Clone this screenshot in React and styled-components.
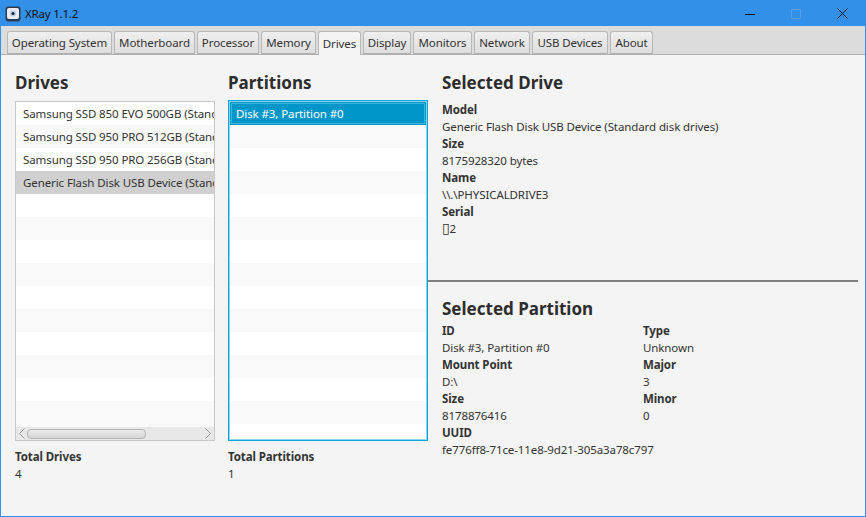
import { createGlobalStyle, styled } from "styled-components";

const Global = createGlobalStyle`
  html, body { margin: 0; padding: 0; }
  body { font-family: "Noto Sans", "Open Sans", sans-serif; color: #333; }
`;

const Win = styled.div`
  width: 866px;
  height: 517px;
  box-sizing: border-box;
  display: flex;
  flex-direction: column;
  border: 1px solid #3390e8;
  background: #f4f4f4;
  overflow: hidden;
`;
const TitleBar = styled.div`
  height: 25px;
  flex: none;
  background: #3390e8;
  display: flex;
  align-items: center;
  padding-left: 4px;
  color: #111;
`;
const AppTitle = styled.span`
  font-size: 11.5px;
  letter-spacing: -0.2px;
  margin-left: 4px;
  flex: 1;
`;
const WinBtn = styled.div`
  width: 46px;
  height: 25px;
  display: flex;
  align-items: center;
  justify-content: center;
`;
const TabBar = styled.div`
  height: 29px;
  flex: none;
  box-sizing: border-box;
  background: #dcdcdc;
  border-bottom: 1px solid #b0b0b0;
  display: flex;
  align-items: flex-end;
  padding-left: 6px;
  gap: 2px;
`;
const Tab = styled.div`
  width: ${(p) => p.$w}px;
  height: ${(p) => (p.$active ? 24 : 23)}px;
  box-sizing: border-box;
  margin-bottom: ${(p) => (p.$active ? -1 : 0)}px;
  border: 1px solid #b8b8b8;
  border-bottom: ${(p) => (p.$active ? "none" : "1px solid #b0b0b0")};
  border-radius: 3px 3px 0 0;
  background: ${(p) => (p.$active ? "#f4f4f4" : "linear-gradient(#efefef, #dedede)")};
  font-size: 11.5px;
  letter-spacing: -0.1px;
  color: #333;
  display: flex;
  align-items: center;
  justify-content: center;
  white-space: nowrap;
  overflow: hidden;
`;
const Content = styled.div`
  flex: 1;
  display: flex;
  min-height: 0;
`;
const ListColumn = styled.div`
  width: 200px;
  flex: none;
  margin-left: ${(p) => p.$ml}px;
  display: flex;
  flex-direction: column;
  padding-top: 16px;
`;
const Heading = styled.div`
  font-size: 17px;
  font-weight: 700;
  line-height: 24px;
  color: #2d2d2d;
`;
const ListBox = styled.div`
  height: ${(p) => (p.$focused ? 341 : 340)}px;
  margin-top: ${(p) => (p.$focused ? 5 : 6)}px;
  box-sizing: border-box;
  display: flex;
  flex-direction: column;
  overflow: hidden;
  background: #8fd3ec;
  border: 1px solid ${(p) => (p.$focused ? "#0aa5dc" : "#c8c8c8")};
  padding: ${(p) => (p.$focused ? 1 : 0)}px;
`;
const Rows = styled.div`
  flex: 1;
  overflow: hidden;
  background: ${(p) => p.$bg};
`;
const Row = styled.div`
  height: 23px;
  box-sizing: border-box;
  padding-left: ${(p) => p.$pl}px;
  font-size: 11.5px;
  letter-spacing: -0.1px;
  line-height: 23px;
  white-space: nowrap;
  overflow: hidden;
  color: ${(p) => (p.$sel === "focus" ? "#fff" : "#333")};
  background: ${(p) =>
    p.$sel === "focus" ? "#0096c9" : p.$sel === "grey" ? "#d0d0d0" : p.$odd ? "#f9f9f9" : "#fff"};
  box-shadow: ${(p) => (p.$sel === "focus" ? "inset 0 0 0 1px #0096c9, inset 0 0 0 2px #3db4dc" : "none")};
`;
const HScroll = styled.div`
  height: 13px;
  flex: none;
  background: #e8e8e8;
  display: flex;
  align-items: center;
  justify-content: space-between;
  padding: 0 3px;
  position: relative;
`;
const Thumb = styled.div`
  position: absolute;
  left: 11px;
  top: 2px;
  width: 117px;
  height: 8px;
  border: 1px solid #b4b4b4;
  border-radius: 4px;
  background: linear-gradient(#ececec, #d6d6d6);
`;
const Footer = styled.div`
  margin-top: 7px;
`;
const Label = styled.div`
  font-size: 11.5px;
  letter-spacing: -0.1px;
  font-weight: 700;
  line-height: 17px;
  color: #333;
`;
const Value = styled.div`
  font-size: 11.5px;
  letter-spacing: -0.1px;
  line-height: 17px;
  color: #333;
  white-space: nowrap;
`;
const MissingGlyph = styled.span`
  font-family: "DejaVu Sans", sans-serif;
  font-size: 14px;
  line-height: 1;
`;
const RightPane = styled.div`
  width: 430px;
  flex: none;
  display: flex;
  flex-direction: column;
`;
const TopPane = styled.div`
  height: 227px;
  flex: none;
  box-sizing: border-box;
  padding: 16px 0 0 14px;
  border-bottom: 2px solid #808080;
`;
const BottomPane = styled.div`
  padding: 15px 0 0 14px;
`;
const Fields = styled.div`
  margin-top: 6px;
`;
const TwoCols = styled.div`
  display: grid;
  grid-template-columns: 201px 1fr;
  margin-top: 1px;
`;

const tabs = [
  ["Operating System", 105], ["Motherboard", 81], ["Processor", 62], ["Memory", 55],
  ["Drives", 43], ["Display", 48], ["Monitors", 59], ["Network", 56], ["USB Devices", 76], ["About", 43],
];
const drives = [
  "Samsung SSD 850 EVO 500GB (Standard disk drives)",
  "Samsung SSD 950 PRO 512GB (Standard disk drives)",
  "Samsung SSD 950 PRO 256GB (Standard disk drives)",
  "Generic Flash Disk USB Device (Standard disk drives)",
];

const Logo = () => (
  <svg width="16" height="16" viewBox="0 0 16 16">
    <rect x="0.5" y="0.5" width="15" height="15" rx="3" fill="#2b3a55" />
    <rect x="2" y="2" width="12" height="11" rx="2" fill="#e8ecf2" />
    <circle cx="8" cy="7.5" r="3" fill="#bcc8dc" />
    <circle cx="8" cy="7.5" r="1.5" fill="#1c2436" />
  </svg>
);

function App() {
  return (
    <Win>
      <Global />
      <TitleBar>
        <Logo />
        <AppTitle>XRay 1.1.2</AppTitle>
        <WinBtn>
          <svg width="10" height="10"><path d="M0 5.5H10" stroke="#111" /></svg>
        </WinBtn>
        <WinBtn>
          <svg width="10" height="10"><rect x="0.5" y="0.5" width="9" height="9" fill="none" stroke="#5a9ee0" /></svg>
        </WinBtn>
        <WinBtn>
          <svg width="11" height="11"><path d="M0.5 0.5L10.5 10.5M10.5 0.5L0.5 10.5" stroke="#111" /></svg>
        </WinBtn>
      </TitleBar>
      <TabBar>
        {tabs.map(([t, w]) => (
          <Tab key={t} $w={w} $active={t === "Drives"}>{t}</Tab>
        ))}
      </TabBar>
      <Content>
        <ListColumn $ml={14}>
          <Heading>Drives</Heading>
          <ListBox>
            <Rows $bg="#f9f9f9">
              {Array.from({ length: 14 }).map((_, i) => (
                <Row key={i} $pl={7} $odd={i % 2 === 1} $sel={i === 3 ? "grey" : undefined}>{drives[i]}</Row>
              ))}
            </Rows>
            <HScroll>
              <svg width="6" height="11"><path d="M5.5 0.5L0.5 5.5L5.5 10.5" fill="none" stroke="#9a9a9a" /></svg>
              <Thumb />
              <svg width="6" height="11"><path d="M0.5 0.5L5.5 5.5L0.5 10.5" fill="none" stroke="#9a9a9a" /></svg>
            </HScroll>
          </ListBox>
          <Footer>
            <Label>Total Drives</Label>
            <Value>4</Value>
          </Footer>
        </ListColumn>
        <ListColumn $ml={13}>
          <Heading>Partitions</Heading>
          <ListBox $focused>
            <Rows $bg="#fff">
              {Array.from({ length: 15 }).map((_, i) => (
                <Row key={i} $pl={6} $odd={i % 2 === 1} $sel={i === 0 ? "focus" : undefined}>
                  {i === 0 ? "Disk #3, Partition #0" : ""}
                </Row>
              ))}
            </Rows>
          </ListBox>
          <Footer>
            <Label>Total Partitions</Label>
            <Value>1</Value>
          </Footer>
        </ListColumn>
        <RightPane>
          <TopPane>
            <Heading>Selected Drive</Heading>
            <Fields>
              <Label>Model</Label>
              <Value>Generic Flash Disk USB Device (Standard disk drives)</Value>
              <Label>Size</Label>
              <Value>8175928320 bytes</Value>
              <Label>Name</Label>
              <Value>\\.\PHYSICALDRIVE3</Value>
              <Label>Serial</Label>
              <Value><MissingGlyph>▯</MissingGlyph>2</Value>
            </Fields>
          </TopPane>
          <BottomPane>
            <Heading>Selected Partition</Heading>
            <TwoCols>
              <div>
                <Label>ID</Label>
                <Value>Disk #3, Partition #0</Value>
                <Label>Mount Point</Label>
                <Value>D:\</Value>
                <Label>Size</Label>
                <Value>8178876416</Value>
                <Label>UUID</Label>
                <Value>fe776ff8-71ce-11e8-9d21-305a3a78c797</Value>
              </div>
              <div>
                <Label>Type</Label>
                <Value>Unknown</Value>
                <Label>Major</Label>
                <Value>3</Value>
                <Label>Minor</Label>
                <Value>0</Value>
              </div>
            </TwoCols>
          </BottomPane>
        </RightPane>
      </Content>
    </Win>
  );
}

export default App;
